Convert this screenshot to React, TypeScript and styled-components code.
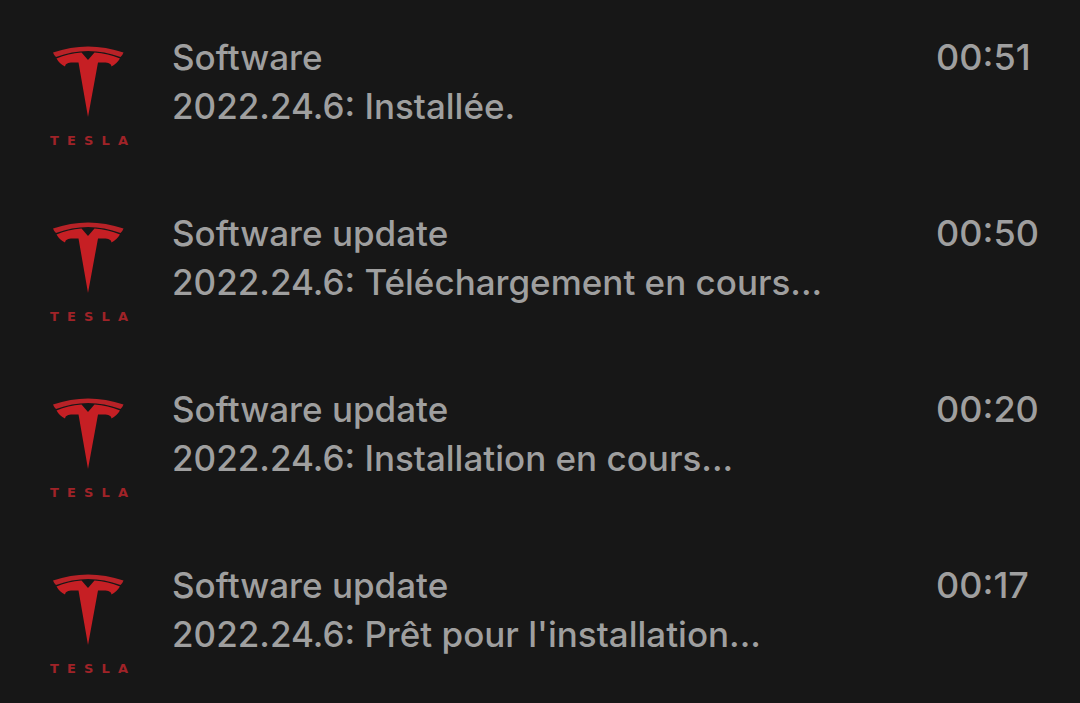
import React from "react";
import styled, { createGlobalStyle } from "styled-components";

const GlobalStyle = createGlobalStyle`
  * { box-sizing: border-box; }
  html { background: #171717; }
  body {
    margin: 0;
    background: #171717;
    color: #9f9f9f;
    font-family: Inter, "Liberation Sans", sans-serif;
    overflow-x: hidden;
  }
`;

const List = styled.ul`
  list-style: none;
  margin: 0;
  padding: 33px 38px 0 50px;
  display: flex;
  flex-direction: column;
  gap: 60px;
`;

const Entry = styled.li`
  display: flex;
  align-items: flex-start;
  font-size: 35px;
  font-weight: 500;
  line-height: 49px;
`;

const Brand = styled.div`
  flex: none;
  display: flex;
  flex-direction: column;
  gap: 15px;
  width: 78px;
  height: 116px;
  padding-top: 12px;
  margin-right: 44px;
`;

const Emblem = styled.svg`
  display: block;
  width: 78px;
  height: 74px;
`;

const Wordmark = styled.div`
  display: flex;
  justify-content: space-between;
  color: #a02328;
  font-family: "DejaVu Sans", sans-serif;
  font-size: 13px;
  font-weight: 700;
  line-height: 14px;
`;

const Message = styled.div`
  flex: 1;
  min-width: 0;
`;

const Title = styled.h2`
  margin: 0;
  font: inherit;
`;

const Detail = styled.p`
  margin: 0;
`;

const Time = styled.time`
  flex: none;
  width: 106px;
  font-size: 36px;
`;

const entries = [
  { title: "Software", detail: "2022.24.6: Installée.", time: "00:51" },
  { title: "Software update", detail: "2022.24.6: Téléchargement en cours...", time: "00:50" },
  { title: "Software update", detail: "2022.24.6: Installation en cours...", time: "00:20" },
  { title: "Software update", detail: "2022.24.6: Prêt pour l'installation...", time: "00:17" },
];

function TeslaLogo() {
  return (
    <Brand>
      <Emblem viewBox="0 0 78 74" fill="#c61f24" aria-hidden="true">
        <path fill="#b82227" d="M3 7.5 Q38 -4.500 73.500 7.500 Q72.500 10.500 70.500 12 Q38 0 6 12 Q4 10.500 3 7.500Z" />
        <path d="M6.500 13.500 Q18 8.500 31.500 7.500 L38 15 L44.500 7.500 Q58 8.500 70 13.500 Q66.500 19 61.500 21.500 C61 18.500 58.500 17.500 54 17.500 L48 17.500 L38 72 L28.500 17.500 L22.500 17.500 C18 17.500 15.500 18.500 15 21.500 Q9.500 19 6.500 13.500Z" />
      </Emblem>
      <Wordmark>
        {[..."TESLA"].map((letter) => (
          <span key={letter}>{letter}</span>
        ))}
      </Wordmark>
    </Brand>
  );
}

export default function App() {
  return (
    <>
      <GlobalStyle />
      <main>
        <List>
          {entries.map((entry) => (
            <Entry key={entry.time}>
              <TeslaLogo />
              <Message>
                <Title>{entry.title}</Title>
                <Detail>{entry.detail}</Detail>
              </Message>
              <Time>{entry.time}</Time>
            </Entry>
          ))}
        </List>
      </main>
    </>
  );
}
